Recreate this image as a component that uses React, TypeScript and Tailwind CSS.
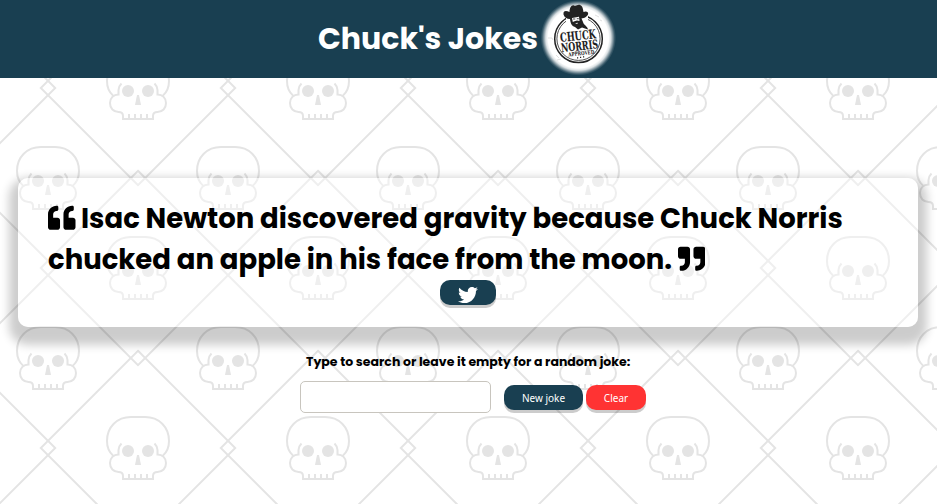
import { FaQuoteLeft, FaQuoteRight, FaTwitter } from 'react-icons/fa';

const heading = "font-['Poppins','Inter',sans-serif] font-bold text-black";
const button =
  "h-[25px] rounded-[10px] font-['Noto_Sans',sans-serif] text-[10px] leading-[26px] text-white shadow-[0_3px_0_rgba(0,0,0,0.2)]";

function Skull({ x, y }: { x: number; y: number }) {
  return (
    <g transform={`translate(${x} ${y})`}>
      <path
        fill="none"
        stroke="#e4e4e4"
        strokeWidth="2"
        d="M7 39.5C3 36 1 31 1 25C1 11 11 1 25 1H39C53 1 63 11 63 25C63 31 61 36 57 39.5M15.5 27.5C13.5 29.5 12.5 31.5 12.5 34V38.5C7.5 38.5 4 42 4 47C4 52.5 7.500 56 12.500 56C15.500 56 17 57.500 17 60V63H47V60C47 57.500 48.500 56 51.500 56C56.500 56 60 52.500 60 47C60 42 56.500 38.500 51.500 38.500V34C51.500 31.500 50.500 29.500 48.500 27.500M23 58V63M29 58V63M35 58V63M41 58V63"
      />
      <circle cx="22" cy="35" r="6" fill="#e4e4e4" />
      <circle cx="42" cy="35" r="6" fill="#e4e4e4" />
      <path d="M31 39H33L35 49H29Z" fill="#e4e4e4" />
    </g>
  );
}

function Backdrop() {
  return (
    <svg className="absolute inset-0 -z-10 h-full w-full" aria-hidden="true">
      <defs>
        <pattern id="skulls" width="180" height="180" patternUnits="userSpaceOnUse">
          {[-42, 138, 318].map((cx) =>
            [-92, 88, 268].map((cy) => (
              <path
                key={`${cx},${cy}`}
                d={`M${cx} ${cy - 97.2}L${cx + 97.2} ${cy}L${cx} ${cy + 97.2}L${cx - 97.2} ${cy}Z`}
                fill="none"
                stroke="#e4e4e4"
                strokeWidth="2"
              />
            )),
          )}
          <Skull x={106} y={56} />
          <Skull x={16} y={146} />
          <Skull x={16} y={-34} />
        </pattern>
      </defs>
      <rect width="100%" height="100%" fill="url(#skulls)" />
    </svg>
  );
}

function Badge() {
  return (
    <svg className="h-[76px] w-[76px] shrink-0" viewBox="540 0 76 76">
      <defs>
        <radialGradient id="halo">
          <stop offset="0.8" stopColor="#fff" />
          <stop offset="0.86" stopColor="#fff" stopOpacity="0.85" />
          <stop offset="0.91" stopColor="#fff" stopOpacity="0.5" />
          <stop offset="0.96" stopColor="#fff" stopOpacity="0.15" />
          <stop offset="1" stopColor="#fff" stopOpacity="0" />
        </radialGradient>
      </defs>
      <circle cx="578.3" cy="37.800" r="37.800" fill="url(#halo)" />
      <g fill="none" stroke="#222">
        <circle cx="578.5" cy="38.800" r="23.800" strokeWidth="1.500" />
        <circle cx="578.5" cy="38.800" r="21.600" strokeWidth="0.800" />
      </g>
      <path d="M566 13H588V27H566Z" fill="#fff" />
      <path
        fill="#222"
        d="M563.500 14.500C563 10.500 566 10.500 569.500 12C569.500 8 571.500 4.500 574 5.500C576.500 6.500 577.500 4 580.500 5.200C583 6.500 583 9.500 583.500 12C586 10.500 589 12 588 14.500C586 18 583 18 581.500 18.500L583 22C583.500 25 587.500 26 588 29.500L582 27.500L578 29.500L575 27C571.500 26 570.500 23 570 19C566.500 18.800 564.500 17.500 563.500 14.500Z"
      />
      <path d="M572 18L579 16.800L579.500 21L577 20.500L574.500 21.300L572.800 22ZM575 23.300L577.800 22.800L577.300 24Z" fill="#fff" />
      <path d="M573 19H575.300M576.800 18.700H578.800" stroke="#222" strokeWidth="0.800" />
      <g
        transform="rotate(-6 578.5 41)"
        fill="#1c1c1c"
        stroke="#1c1c1c"
        textAnchor="middle"
        className="font-['DejaVu_Serif',serif] font-bold"
      >
        <text x="578.500" y="40.200" fontSize="12.500" textLength="36" lengthAdjust="spacingAndGlyphs" strokeWidth="0.100">CHUCK</text>
        <text x="579" y="50.300" fontSize="12" textLength="37" lengthAdjust="spacingAndGlyphs" strokeWidth="0.100">NORRIS</text>
        <text x="580" y="55.400" fontSize="5.500" textLength="26" lengthAdjust="spacingAndGlyphs" strokeWidth="0">APPROVED</text>
      </g>
      <path d="M577 57.800h1.200M580 57.300h1.200M583 56.800h1.200" stroke="#222" strokeWidth="1.200" />
      <path d="M595 15l4 2M600 20l2 1M548 38h4l1 2M556 55l3 3M557 60l4-1" stroke="#ccc" strokeWidth="0.600" fill="none" />
    </svg>
  );
}

export default function App() {
  return (
    <div className="relative isolate h-[504px] w-full overflow-hidden bg-white">
      <Backdrop />
      <header className="flex h-[78px] items-start bg-[#193f51] pl-[318px]">
        <h1 className="w-[222px] whitespace-nowrap font-['Poppins','Inter',sans-serif] text-[30px] font-bold leading-[78px] text-white">
          Chuck's Jokes
        </h1>
        <Badge />
      </header>

      <main className="flex flex-col pt-[100px]">
        <section className="ml-[18px] flex h-[149px] w-[900px] flex-col rounded-[10px] bg-white/40 px-[30px] pt-5 shadow-[0_9px_10px_9px_rgba(0,0,0,0.2)]">
          <blockquote className={`${heading} whitespace-nowrap text-[27.5px] leading-[41px]`}>
            <p className="flex h-[41px] items-center">
              <FaQuoteLeft className="mb-[2px] mr-[5.5px] size-[27.5px] shrink-0" />
              <span>Isac Newton discovered gravity because Chuck Norris</span>
            </p>
            <p className="flex h-[41px] items-center">
              <span>chucked an apple in his face from the moon.</span>
              <FaQuoteRight className="mb-[2px] ml-[5.5px] size-[27.5px] shrink-0" />
            </p>
          </blockquote>
          <button className={`${button} ml-[392px] flex w-14 items-center justify-center bg-[#193f51] pt-[5px]`}>
            <FaTwitter className="size-5" />
          </button>
        </section>

        <form className="flex flex-col pt-[26px]">
          <label htmlFor="query" className={`${heading} whitespace-nowrap pl-[306px] text-[12.5px] leading-[18px]`}>
            Type to search or leave it empty for a random joke:
          </label>
          <div className="flex items-center pl-[300px] pt-[10px]">
            <input id="query" className="h-8 w-[191px] rounded-[5px] border border-[#c8c5be] bg-white" />
            <button type="button" className={`${button} ml-[13px] w-[79px] bg-[#193f51]`}>New joke</button>
            <button type="button" className={`${button} ml-[3px] w-[60px] bg-[#ff3333]`}>Clear</button>
          </div>
        </form>
      </main>
    </div>
  );
}
